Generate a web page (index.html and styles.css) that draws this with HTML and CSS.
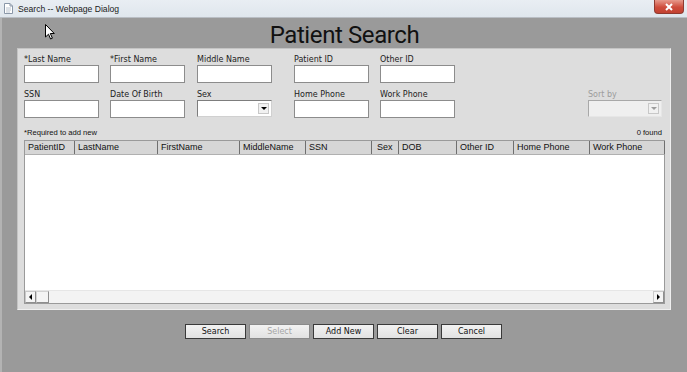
FILE: index.html
```html
<!DOCTYPE html>
<html lang="en">
<head>
  <meta charset="UTF-8">
  <title>Search -- Webpage Dialog</title>
  <link rel="stylesheet" href="styles.css">
</head>
<body>
  <div class="titlebar">
    <svg class="doc-icon" width="9" height="11" viewBox="0 0 9 11">
      <path d="M0.5 0.5 H6 L8.5 3 V10.5 H0.5 Z" fill="#fff" stroke="#8a97a8"/>
      <path d="M6 0.5 V3 H8.5" fill="none" stroke="#8a97a8"/>
      <path d="M2 5 H7 M2 7 H7 M2 9 H6" stroke="#b9c3cf"/>
    </svg>
    <span class="titlebar-text">Search -- Webpage Dialog</span>
    <div class="close-btn">
      <svg width="10" height="8" viewBox="0 0 10 8">
        <path d="M2 1 L8 7 M8 1 L2 7" stroke="#fff" stroke-width="2"/>
      </svg>
    </div>
  </div>

  <div class="window">
    <h1 class="page-title">Patient Search</h1>

    <div class="panel">
      <div class="fields">
        <div class="field"><label>*Last Name</label><input class="text-input" type="text"></div>
        <div class="field"><label>*First Name</label><input class="text-input" type="text"></div>
        <div class="field"><label>Middle Name</label><input class="text-input" type="text"></div>
        <div class="field"><label>Patient ID</label><input class="text-input" type="text"></div>
        <div class="field"><label>Other ID</label><input class="text-input" type="text"></div>

        <div class="field new-row"><label>SSN</label><input class="text-input" type="text"></div>
        <div class="field"><label>Date Of Birth</label><input class="text-input" type="text"></div>
        <div class="field">
          <label>Sex</label>
          <div class="combo"><span class="combo-arrow"><i></i></span></div>
        </div>
        <div class="field"><label>Home Phone</label><input class="text-input" type="text"></div>
        <div class="field"><label>Work Phone</label><input class="text-input" type="text"></div>
        <div class="field sort-field">
          <label>Sort by</label>
          <div class="combo disabled"><span class="combo-arrow"><i></i></span></div>
        </div>
      </div>

      <div class="table-info">
        <span>*Required to add new</span>
        <span>0 found</span>
      </div>

      <div class="results">
        <div class="results-head">
          <div class="col" style="width:50px">PatientID</div>
          <div class="col" style="width:83px">LastName</div>
          <div class="col" style="width:82px">FirstName</div>
          <div class="col" style="width:66px">MiddleName</div>
          <div class="col" style="width:66px">SSN</div>
          <div class="col col-sex" style="width:27px">Sex</div>
          <div class="col" style="width:58px">DOB</div>
          <div class="col" style="width:57px">Other ID</div>
          <div class="col" style="width:76px">Home Phone</div>
          <div class="col last" style="width:75px">Work Phone</div>
        </div>
        <div class="results-body"></div>
        <div class="hscroll">
          <span class="scroll-btn"><i class="arrow-left"></i></span>
          <span class="scroll-thumb"></span>
          <span class="scroll-track"></span>
          <span class="scroll-btn"><i class="arrow-right"></i></span>
        </div>
      </div>
    </div>

    <div class="buttons">
      <button class="btn">Search</button>
      <button class="btn" disabled>Select</button>
      <button class="btn">Add New</button>
      <button class="btn">Clear</button>
      <button class="btn">Cancel</button>
    </div>
  </div>

  <svg class="cursor" width="10" height="16" viewBox="0 0 10 16">
    <path d="M0.5 0.5 V13 L3.5 10.2 L5.6 15 L7.4 14.2 L5.3 9.5 H9.3 Z" fill="#fff" stroke="#000" stroke-width="1" stroke-linejoin="round"/>
  </svg>
</body>
</html>
```

FILE: styles.css
```css
html, body {
  margin: 0;
  padding: 0;
}

body {
  width: 687px;
  height: 372px;
  overflow: hidden;
  background: #9a9a9a;
  font-family: "DejaVu Sans", Verdana, sans-serif;
  position: relative;
}

/* dialog title bar */
.titlebar {
  height: 18px;
  display: flex;
  align-items: center;
  background: linear-gradient(#e9eef3, #dfe6ed);
  border-bottom: 1px solid #b9bec4;
  box-sizing: border-box;
  position: relative;
}

.doc-icon {
  margin-left: 4px;
  margin-right: 5px;
}

.titlebar-text {
  font-family: "Liberation Sans", Arial, sans-serif;
  font-size: 8.6px;
  color: #1b1b1b;
}

.close-btn {
  position: absolute;
  top: 0;
  left: 654px;
  width: 30px;
  height: 14px;
  background: linear-gradient(#e79a8c, #cf4d3c 55%, #c24232);
  border: 1px solid #8f3a30;
  border-top: none;
  border-radius: 0 0 4px 4px;
  box-sizing: border-box;
  display: flex;
  align-items: center;
  justify-content: center;
}

/* window body */
.window {
  height: 354px;
  border-left: 2px solid #b3b3b3;
  box-sizing: border-box;
}

.page-title {
  margin: 0;
  height: 30px;
  padding-top: 4px;
  box-sizing: border-box;
  line-height: 26px;
  text-align: center;
  font-family: Roboto, "Liberation Sans", sans-serif;
  font-weight: normal;
  font-size: 24px;
  letter-spacing: -0.4px;
  color: #111;
}

.panel {
  margin-left: 15px;
  width: 654px;
  height: 262px;
  box-sizing: border-box;
  background: #dddddd;
  border-top: 1px solid #c4c4c4;
  border-left: 1px solid #c4c4c4;
  border-right: 1px solid #efefef;
  border-bottom: 1px solid #efefef;
  padding: 5px 5px 0 6px;
}

.fields {
  display: grid;
  grid-template-columns: 86px 87px 97px 86px 75px 1fr 77px;
  row-gap: 6px;
}

.field label {
  display: block;
  height: 11px;
  line-height: 11px;
  font-size: 8px;
  color: #222;
  white-space: nowrap;
}

.new-row {
  grid-column: 1;
}

.sort-field {
  grid-column: 7;
}

.sort-field label {
  color: #9c9c9c;
}

.text-input {
  display: block;
  width: 75px;
  height: 18px;
  margin: 0;
  padding: 0;
  box-sizing: border-box;
  border: 1px solid #8c8c8c;
  background: #fff;
}

.combo {
  width: 75px;
  height: 17px;
  box-sizing: border-box;
  border: 1px solid #7d7d7d;
  border-right-color: #d0d0d0;
  border-bottom-color: #d0d0d0;
  background: #fff;
  display: flex;
  justify-content: flex-end;
  align-items: center;
  padding-right: 2px;
}

.combo-arrow {
  width: 11px;
  height: 11px;
  box-sizing: border-box;
  border: 1px solid #c8c8c8;
  background: #f1f1f1;
  display: flex;
  align-items: center;
  justify-content: center;
}

.combo-arrow i {
  width: 0;
  height: 0;
  border-left: 3px solid transparent;
  border-right: 3px solid transparent;
  border-top: 3px solid #000;
}

.combo.disabled {
  width: 74px;
  background: #efefef;
  border-color: #a8a8a8;
  border-right-color: #e6e6e6;
  border-bottom-color: #e6e6e6;
}

.combo.disabled .combo-arrow i {
  border-top-color: #9c9c9c;
}

.table-info {
  margin-top: 10px;
  height: 10px;
  line-height: 10px;
  display: flex;
  justify-content: space-between;
  padding-right: 3px;
  font-family: "Liberation Sans", Arial, sans-serif;
  font-size: 7.6px;
  color: #111;
}

/* results grid */
.results {
  margin-top: 2px;
  width: 641px;
  border: 1px solid #9a9a9a;
  box-sizing: border-box;
  background: #fff;
}

.results-head {
  display: flex;
  height: 14px;
  background: #d6d6d6;
  border-bottom: 1px solid #b0b0b0;
  box-sizing: border-box;
}

.col {
  flex: none;
  box-sizing: border-box;
  padding-left: 3px;
  border-right: 1px solid #6f6f6f;
  font-family: "Liberation Sans", Arial, sans-serif;
  font-size: 9px;
  line-height: 13px;
  color: #111;
  white-space: nowrap;
  overflow: hidden;
}

.col-sex {
  padding-left: 5px;
}

.col.last {
  border-right: 1px solid #6f6f6f;
}

.results-body {
  height: 135px;
}

.hscroll {
  height: 13px;
  display: flex;
  background: #f3f3f3;
  border-top: 1px solid #e6e6e6;
  box-sizing: border-box;
}

.scroll-btn {
  width: 11px;
  height: 12px;
  box-sizing: border-box;
  border: 1px solid #c9c9c9;
  border-right-color: #8e8e8e;
  border-bottom-color: #8e8e8e;
  background: #f4f4f4;
  display: flex;
  align-items: center;
  justify-content: center;
}

.scroll-thumb {
  width: 13px;
  height: 12px;
  box-sizing: border-box;
  border: 1px solid #d2d2d2;
  border-right-color: #8e8e8e;
  border-bottom-color: #8e8e8e;
  background: #f4f4f4;
}

.scroll-track {
  flex: 1;
}

.arrow-left {
  width: 0;
  height: 0;
  border-top: 3px solid transparent;
  border-bottom: 3px solid transparent;
  border-right: 3px solid #000;
}

.arrow-right {
  width: 0;
  height: 0;
  border-top: 3px solid transparent;
  border-bottom: 3px solid transparent;
  border-left: 3px solid #000;
}

/* action buttons */
.buttons {
  display: flex;
  gap: 3px;
  margin-top: 14px;
  padding-left: 183px;
}

.btn {
  width: 61px;
  height: 15px;
  margin: 0;
  padding: 0;
  box-sizing: border-box;
  border: 1px solid #3a3a3a;
  background: linear-gradient(#f2f2f2, #e2e2e2);
  font-family: "DejaVu Sans", Verdana, sans-serif;
  font-size: 8px;
  line-height: 13px;
  color: #111;
}

.btn:disabled {
  color: #a5a5a5;
  border-color: #8a8a8a;
}

.cursor {
  position: absolute;
  left: 45px;
  top: 24px;
}
```
